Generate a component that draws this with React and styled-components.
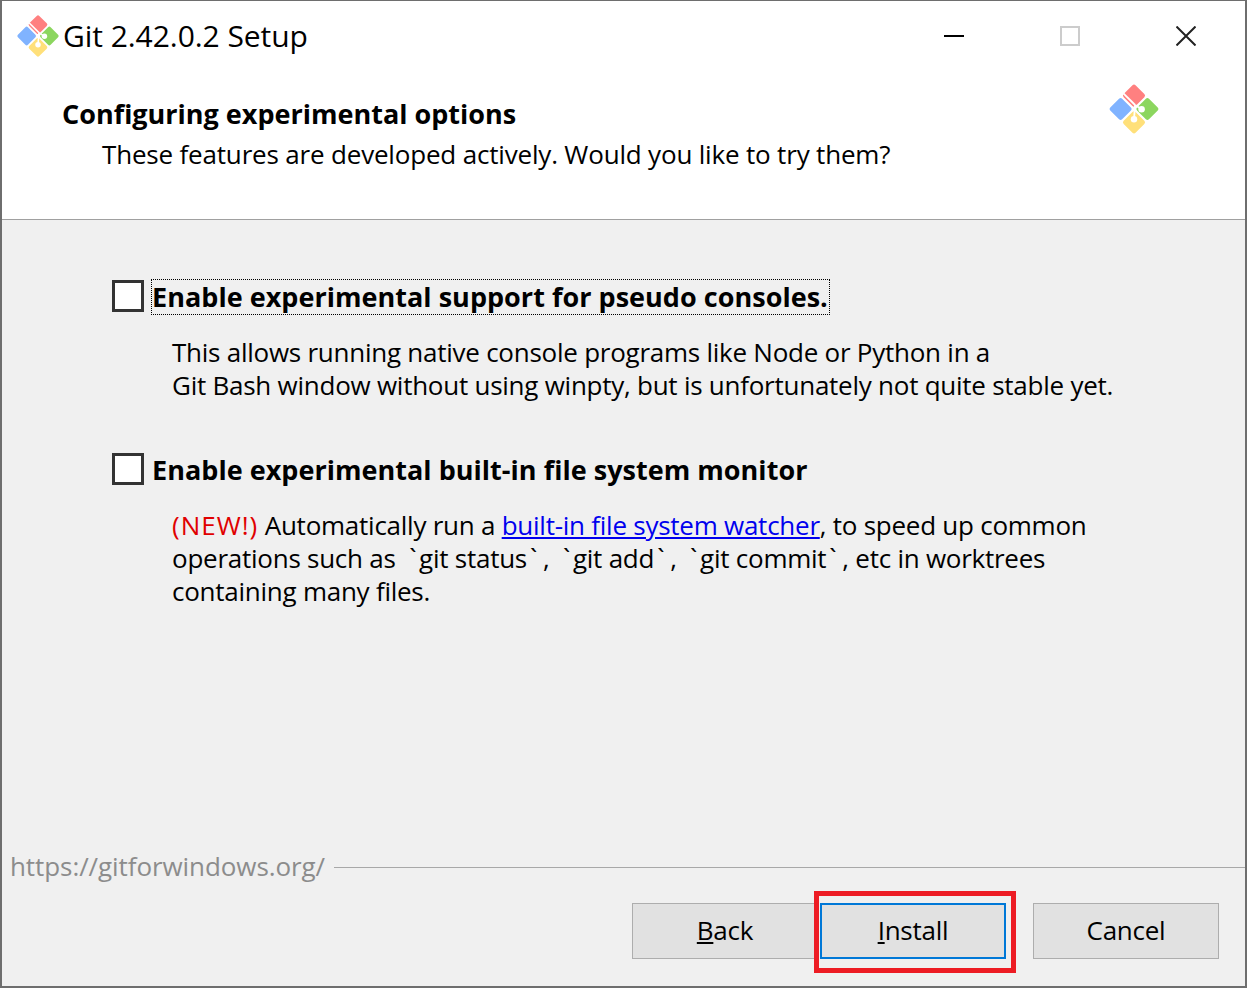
import React from 'react';
import styled, { createGlobalStyle } from 'styled-components';

const GlobalStyle = createGlobalStyle`
  html, body {
    margin: 0;
    padding: 0;
    background: #f0f0f0;
  }
`;

const Window = styled.div`
  width: 1247px;
  height: 988px;
  box-sizing: border-box;
  border: 2px solid #6e6e6e;
  border-top-width: 1px;
  display: flex;
  flex-direction: column;
  background: #f0f0f0;
  font-family: "Open Sans", "Noto Sans", sans-serif;
  font-size: 26px;
  letter-spacing: -0.25px;
  color: #000;
  position: relative;
  overflow: hidden;
`;

const Header = styled.header`
  height: 218px;
  flex: none;
  background: #fff;
  border-bottom: 1px solid #a0a0a0;
  display: flex;
  flex-direction: column;
`;

const TitleBar = styled.div`
  height: 70px;
  display: flex;
  align-items: center;
  padding: 0 1px 0 14px;
`;

const TitleText = styled.div`
  margin-left: 3px;
  font-size: 30px;
  letter-spacing: -0.05px;
  line-height: 70px;
  flex: 1;
`;

const WindowButton = styled.div`
  width: 116px;
  height: 70px;
  display: flex;
  align-items: center;
  justify-content: center;
  flex: none;
`;

const HeaderBody = styled.div`
  display: flex;
  justify-content: space-between;
  align-items: flex-start;
  padding: 12px 85px 0 60px;
`;

const HeaderText = styled.div`
  padding-top: 11px;
`;

const HeaderTitle = styled.h1`
  margin: 0;
  font-size: 27px;
  letter-spacing: 0;
  line-height: 40px;
  font-weight: 700;
`;

const HeaderSub = styled.p`
  margin: 0 0 0 40px;
  letter-spacing: -0.18px;
  line-height: 40px;
`;

const Main = styled.main`
  flex: 1;
  display: flex;
  flex-direction: column;
  padding: 59px 0 0 110px;
  gap: 50px;
`;

const Option = styled.section`
  display: flex;
  flex-direction: column;
`;

const OptionRow = styled.div`
  display: flex;
  align-items: center;
  height: 36px;
`;

const CheckBox = styled.span`
  width: 32px;
  height: 32px;
  box-sizing: border-box;
  border: 3px solid #333;
  background: #fff;
  flex: none;
  margin-bottom: 2px;
`;

const OptionLabel = styled.span`
  margin-left: 8px;
  padding: 0 1px 0 0;
  height: 34px;
  line-height: 34px;
  font-size: 27px;
  letter-spacing: 0.03px;
  font-weight: 700;
  outline: ${(p) => (p.$focused ? '1px dotted #000' : 'none')};
  outline-offset: 0;
`;

const OptionText = styled.p`
  margin: 21px 0 0 60px;
  line-height: 33px;
`;

const NewTag = styled.span`
  color: #e00000;
  letter-spacing: 1px;
`;

const DocLink = styled.a`
  color: #0000ee;
  text-decoration: underline;
`;

const Tick = styled.span`
  padding: ${(p) => (p.$open ? '0 3px 0 7px' : '0 6px 0 3px')};
`;

const Footer = styled.footer`
  flex: none;
  display: flex;
  flex-direction: column;
`;

const Brand = styled.div`
  display: flex;
  align-items: center;
  height: 30px;
  padding-left: 8px;
  color: #8c8c8c;
  letter-spacing: -0.08px;
`;

const BrandText = styled.span`
  margin-bottom: 3px;
`;

const BrandLine = styled.div`
  flex: 1;
  height: 1px;
  background: #a8a8a8;
  margin-left: 9px;
`;

const ButtonRow = styled.div`
  display: flex;
  justify-content: flex-end;
  height: 104px;
  box-sizing: border-box;
  padding: 21px 26px 0 0;
`;

const Button = styled.div`
  width: 186px;
  height: 56px;
  box-sizing: border-box;
  border: 1px solid ${(p) => (p.$primary ? '#0078d7' : '#adadad')};
  box-shadow: ${(p) => (p.$primary ? 'inset 0 0 0 1px #0078d7' : 'none')};
  background: #e1e1e1;
  display: flex;
  align-items: center;
  justify-content: center;
  padding-bottom: 2px;
  margin-left: ${(p) => p.$gap}px;
  position: relative;
`;

const Highlight = styled.div`
  position: absolute;
  left: -7px;
  top: -13px;
  width: 202px;
  height: 82px;
  box-sizing: border-box;
  border: 5px solid #ed1c24;
`;

const Underlined = styled.span`
  text-decoration: underline;
`;

function GitLogo({ size }) {
  return (
    <svg width={size} height={size} viewBox="0 0 48 48" aria-hidden="true">
      <g transform="rotate(45 24 24)">
        <rect x="7.5" y="7.5" width="15.5" height="15.5" rx="2" fill="#ff8080" />
        <rect x="25" y="7.5" width="15.5" height="15.5" rx="2" fill="#8cd65f" />
        <rect x="25" y="25" width="15.5" height="15.5" rx="2" fill="#ffe07a" />
        <rect x="7.5" y="25" width="15.5" height="15.5" rx="2" fill="#80b3ff" />
      </g>
      <g fill="none" stroke="#fff" strokeWidth="1.7">
        <path d="M14.2 9.5L25 20.3" />
        <path d="M25 20.3L24 33.5" />
        <path d="M25 20.3L31 24.3" />
      </g>
      <circle cx="24" cy="33.5" r="3" fill="#fff" />
      <circle cx="31" cy="24.3" r="3" fill="#fff" />
    </svg>
  );
}

function MinimizeIcon() {
  return (
    <svg width="20" height="20" viewBox="0 0 20 20" aria-hidden="true">
      <path d="M0 10h20" stroke="#000" strokeWidth="2" />
    </svg>
  );
}

function MaximizeIcon() {
  return (
    <svg width="20" height="20" viewBox="0 0 20 20" aria-hidden="true">
      <rect x="1" y="1" width="18" height="18" fill="none" stroke="#ccc" strokeWidth="2" />
    </svg>
  );
}

function CloseIcon() {
  return (
    <svg width="20" height="20" viewBox="0 0 20 20" aria-hidden="true">
      <path d="M0.5 0.5L19.5 19.5M19.5 0.5L0.5 19.5" stroke="#222" strokeWidth="2" />
    </svg>
  );
}

export default function App() {
  return (
    <Window>
      <GlobalStyle />
      <Header>
        <TitleBar>
          <GitLogo size={44} />
          <TitleText>Git 2.42.0.2 Setup</TitleText>
          <WindowButton>
            <MinimizeIcon />
          </WindowButton>
          <WindowButton>
            <MaximizeIcon />
          </WindowButton>
          <WindowButton>
            <CloseIcon />
          </WindowButton>
        </TitleBar>
        <HeaderBody>
          <HeaderText>
            <HeaderTitle>Configuring experimental options</HeaderTitle>
            <HeaderSub>These features are developed actively. Would you like to try them?</HeaderSub>
          </HeaderText>
          <GitLogo size={52} />
        </HeaderBody>
      </Header>
      <Main>
        <Option>
          <OptionRow>
            <CheckBox />
            <OptionLabel $focused>Enable experimental support for pseudo consoles.</OptionLabel>
          </OptionRow>
          <OptionText>
            This allows running native console programs like Node or Python in a
            <br />
            Git Bash window without using winpty, but is unfortunately not quite stable yet.
          </OptionText>
        </Option>
        <Option>
          <OptionRow>
            <CheckBox />
            <OptionLabel>Enable experimental built-in file system monitor</OptionLabel>
          </OptionRow>
          <OptionText>
            <NewTag>(NEW!)</NewTag> Automatically run a <DocLink>built-in file system watcher</DocLink>, to speed up common
            <br />
            operations such as <Tick $open>`</Tick>git status<Tick>`</Tick>, <Tick $open>`</Tick>git add<Tick>`</Tick>, <Tick $open>`</Tick>git commit<Tick>`</Tick>, etc in worktrees
            <br />
            containing many files.
          </OptionText>
        </Option>
      </Main>
      <Footer>
        <Brand>
          <BrandText>https://gitforwindows.org/</BrandText>
          <BrandLine />
        </Brand>
        <ButtonRow>
          <Button>
            <span><Underlined>B</Underlined>ack</span>
          </Button>
          <Button $primary $gap={2}>
            <span><Underlined>I</Underlined>nstall</span>
            <Highlight />
          </Button>
          <Button $gap={27}>Cancel</Button>
        </ButtonRow>
      </Footer>
    </Window>
  );
}
